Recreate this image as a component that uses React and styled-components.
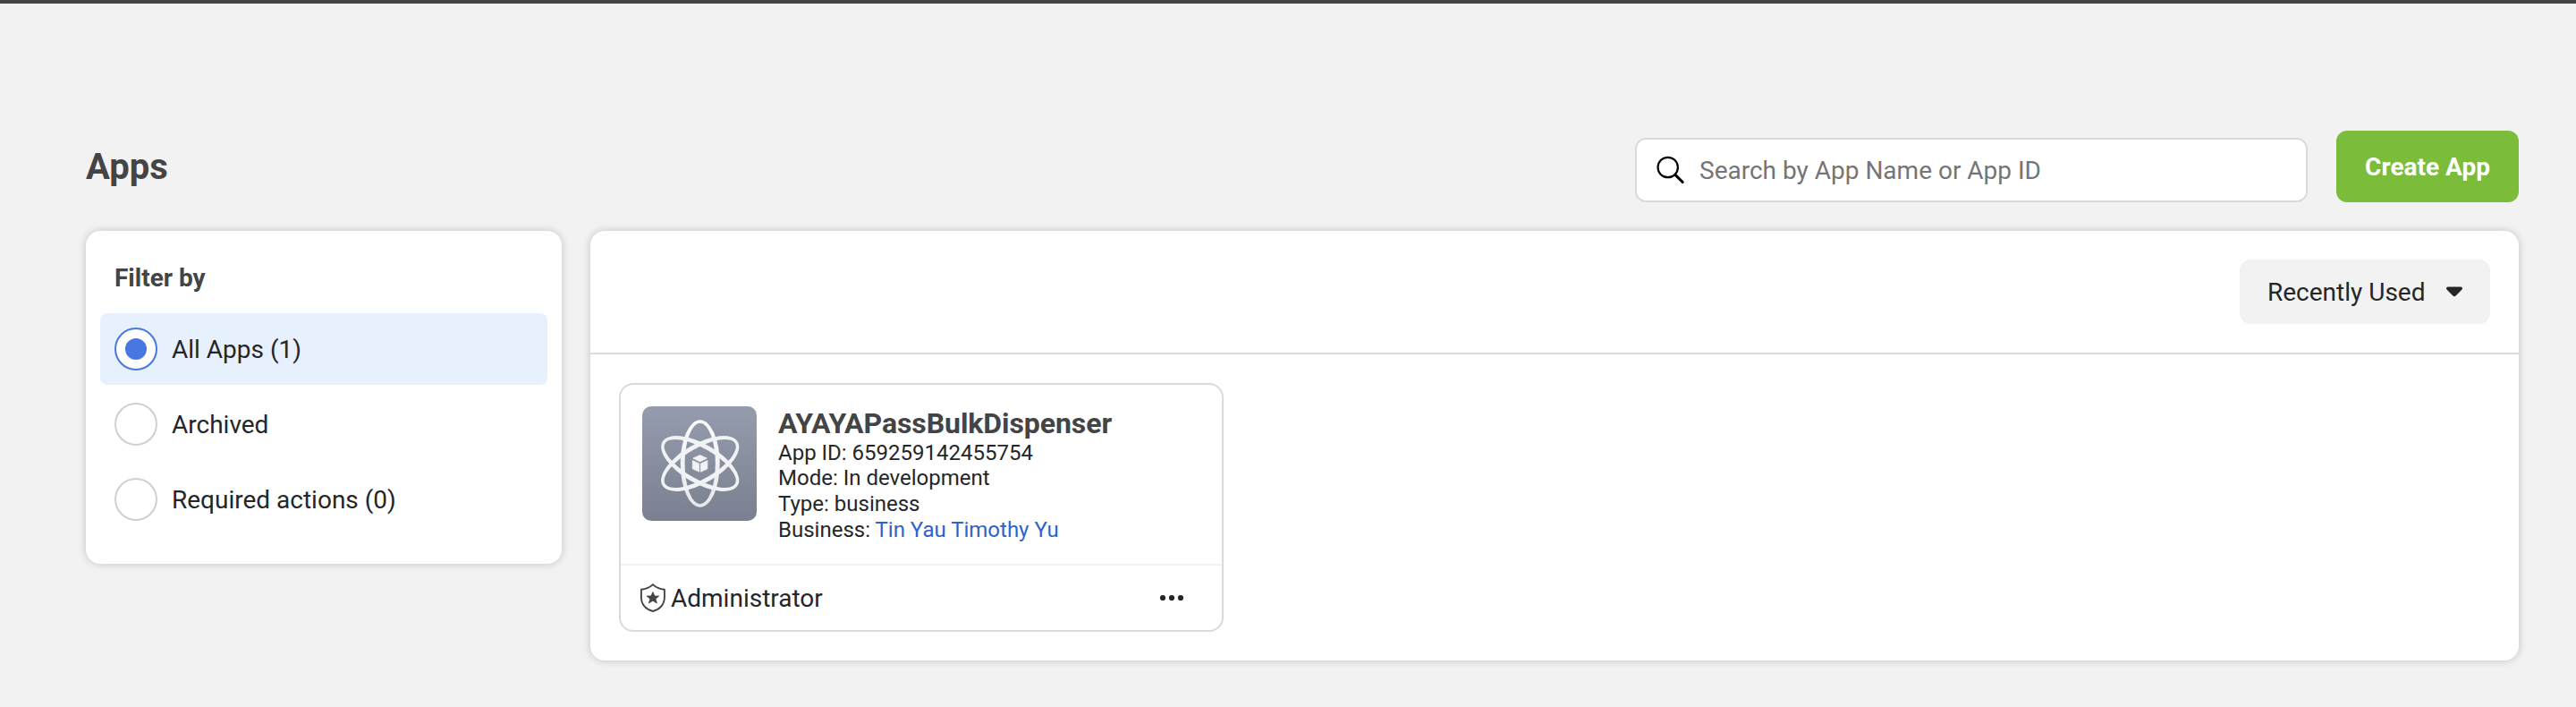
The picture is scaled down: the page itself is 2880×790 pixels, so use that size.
import React from "react";
import styled, { createGlobalStyle } from "styled-components";

const GlobalStyle = createGlobalStyle`
  *, *::before, *::after { box-sizing: border-box; }
  body {
    margin: 0;
    background: #f2f2f2;
    color: #252627;
    font-family: Roboto, "Liberation Sans", sans-serif;
    font-size: 28px;
    line-height: 36px;
  }
`;

const Page = styled.div`
  min-height: 790px;
  border-top: 4px solid #444;
  padding: 142px 64px 52px 96px;
`;

const Header = styled.header`
  display: flex;
  align-items: center;
  height: 80px;
  margin-bottom: 32px;
`;

const PageTitle = styled.h1`
  margin: 0;
  padding-top: 2px;
  flex: 1;
  font-size: 40px;
  line-height: 48px;
  font-weight: 700;
  color: #444;
`;

const SearchBox = styled.label`
  display: flex;
  align-items: center;
  align-self: flex-end;
  width: 752px;
  height: 72px;
  margin-right: 32px;
  padding: 0 22px;
  gap: 16px;
  background: #fff;
  border: 2px solid #dadada;
  border-radius: 12px;
`;

const SearchInput = styled.input`
  flex: 1;
  min-width: 0;
  height: 100%;
  padding: 0;
  border: 0;
  outline: 0;
  background: transparent;
  font: inherit;
  color: inherit;
  &::placeholder { color: #757575; opacity: 1; }
`;

const CreateButton = styled.button`
  width: 204px;
  height: 80px;
  padding: 2px 0 0;
  border: 0;
  border-radius: 12px;
  background: #7bbc3a;
  color: #fff;
  font: inherit;
  font-weight: 700;
`;

const Columns = styled.div`
  display: flex;
  align-items: flex-start;
  gap: 32px;
`;

const Panel = styled.section`
  background: #fff;
  border-radius: 16px;
  box-shadow: 0 0 10px rgba(0, 0, 0, 0.2);
`;

const FilterPanel = styled(Panel)`
  width: 532px;
  height: 372px;
  padding: 35px 16px 0;
`;

const FilterTitle = styled.h2`
  margin: 0 0 21px;
  padding-left: 16px;
  font-size: 28px;
  line-height: 36px;
  font-weight: 700;
  color: #444;
`;

const FilterList = styled.div`
  display: flex;
  flex-direction: column;
  gap: 4px;
`;

const FilterRow = styled.div`
  display: flex;
  align-items: center;
  gap: 16px;
  height: 80px;
  padding: 0 16px;
  border-radius: 8px;
  background: ${(p) => (p.$selected ? "#e7f1fe" : "transparent")};
`;

const Label = styled.span`
  padding-top: 2px;
`;

const Radio = styled.span`
  display: flex;
  align-items: center;
  justify-content: center;
  width: 48px;
  height: 48px;
  border-radius: 50%;
  background: #fff;
  border: 2px solid ${(p) => (p.$selected ? "#4877e0" : "#ced0d4")};
  &::after {
    content: "";
    width: 24px;
    height: 24px;
    border-radius: 50%;
    background: ${(p) => (p.$selected ? "#4877e0" : "transparent")};
  }
`;

const AppsPanel = styled(Panel)`
  flex: 1;
  height: 480px;
`;

const PanelToolbar = styled.div`
  display: flex;
  align-items: center;
  justify-content: flex-end;
  height: 138px;
  padding: 0 32px;
  border-bottom: 2px solid #dadada;
`;

const SortButton = styled.button`
  display: flex;
  align-items: center;
  justify-content: space-between;
  width: 280px;
  height: 72px;
  padding: 0 31px;
  border: 0;
  border-radius: 12px;
  background: #f2f2f2;
  color: inherit;
  font: inherit;
`;

const CardGrid = styled.div`
  display: flex;
  padding: 32px;
`;

const Card = styled.article`
  width: 676px;
  height: 278px;
  border: 2px solid #dadada;
  border-radius: 16px;
`;

const CardBody = styled.div`
  display: flex;
  gap: 24px;
  height: 202px;
  padding: 24px;
  border-bottom: 2px solid #f1f1f1;
`;

const Details = styled.div`
  font-size: 24px;
  line-height: 28.8px;
`;

const AppName = styled.h3`
  margin: 0 0 -0.4px;
  font-size: 32px;
  line-height: 38px;
  letter-spacing: -0.07px;
  font-weight: 700;
  color: #444;
`;

const Link = styled.a`
  color: #2f62cc;
  text-decoration: none;
`;

const CardFooter = styled.div`
  display: flex;
  align-items: center;
  height: 72px;
  padding: 0 42px 0 20px;
`;

const Role = styled(Label)`
  flex: 1;
  padding-left: 4px;
`;

const Icon = styled.svg`
  display: block;
  flex: none;
`;

const SearchIcon = () => (
  <Icon width="32" height="32" viewBox="0 0 32 32" fill="none" stroke="#000">
    <circle cx="12.7" cy="13" r="11.2" strokeWidth="2.2" />
    <path d="M21 21.3 29.2 29.5" strokeWidth="3.1" strokeLinecap="round" />
  </Icon>
);

const CaretIcon = () => (
  <Icon width="18" height="12" viewBox="0 0 18 12" fill="#252627">
    <path d="M1.8 0.4H16.2C18 0.4 18.5 2.6 17.3 3.8L10.6 10.6Q9 12.1 7.4 10.6L0.7 3.8C-0.5 2.6 0 0.4 1.8 0.4Z" />
  </Icon>
);

const ShieldIcon = () => (
  <Icon width="32" height="32" viewBox="0 0 32 32">
    <path
      d="M15.9 1.1C12.4 4.5 8 6.2 2.9 6.7V15.5C2.9 23.5 8.5 29.3 15.9 31C23.3 29.3 28.9 23.5 28.9 15.5V6.7C23.8 6.2 19.4 4.5 15.9 1.1Z"
      fill="none"
      stroke="#444"
      strokeWidth="1.9"
      strokeLinejoin="round"
    />
    <path
      d="M15.9 9.5 17.9 14H22.7L19 17.2 20.4 22 15.9 19.2 11.4 22 12.8 17.2 9.1 14H13.9Z"
      fill="#444"
      stroke="#444"
      strokeWidth="0.8"
      strokeLinejoin="round"
    />
  </Icon>
);

const MoreIcon = () => (
  <Icon width="28" height="8" viewBox="0 0 28 8" fill="#252627">
    <circle cx="4" cy="4" r="3.1" />
    <circle cx="14" cy="4" r="3.1" />
    <circle cx="24" cy="4" r="3.1" />
  </Icon>
);

// A ring that is thicker along its sides than at its tips.
const ORBIT =
  "M64.7 15.3A22 48.7 0 0 1 64.7 112.7A22 48.7 0 0 1 64.7 15.3ZM64.7 18.8A17.1 45.2 0 0 0 64.7 109.2A17.1 45.2 0 0 0 64.7 18.8Z";

const AtomLogo = () => (
  <Icon width="128" height="128" viewBox="0 0 128 128">
    <defs>
      <linearGradient id="tile" x1="0" y1="0" x2="0" y2="1">
        <stop offset="0" stopColor="#959cad" />
        <stop offset="1" stopColor="#7a8090" />
      </linearGradient>
      <linearGradient id="orbit" gradientUnits="userSpaceOnUse" x1="0" y1="15" x2="0" y2="113">
        <stop offset="0" stopColor="#fcfcfd" />
        <stop offset="1" stopColor="#e5e7ea" />
      </linearGradient>
    </defs>
    <rect width="128" height="128" rx="10" fill="url(#tile)" />
    <g fill="#f1f2f4" fillRule="evenodd">
      <path d={ORBIT} fill="url(#orbit)" />
      <path d={ORBIT} transform="rotate(60 64.7 64)" />
      <path d={ORBIT} transform="rotate(-60 64.7 64)" />
      <path d="M64.6 54.6 72.3 58 64.6 61.9 56.9 58Z" strokeLinejoin="round" stroke="#f1f2f4" strokeWidth="0.8" />
      <path d="M56.3 60.5 63.7 64.1V73.2L56.3 69.8Z" strokeLinejoin="round" stroke="#f1f2f4" strokeWidth="0.8" />
      <path d="M72.9 60.5 65.5 64.1V73.2L72.9 69.8Z" strokeLinejoin="round" stroke="#f1f2f4" strokeWidth="0.8" />
    </g>
  </Icon>
);

const FILTERS = [
  { label: "All Apps (1)", selected: true },
  { label: "Archived", selected: false },
  { label: "Required actions (0)", selected: false },
];

export default function App() {
  return (
    <>
      <GlobalStyle />
      <Page>
        <Header>
          <PageTitle>Apps</PageTitle>
          <SearchBox>
            <SearchIcon />
            <SearchInput placeholder="Search by App Name or App ID" />
          </SearchBox>
          <CreateButton>Create App</CreateButton>
        </Header>
        <Columns>
          <FilterPanel>
            <FilterTitle>Filter by</FilterTitle>
            <FilterList>
              {FILTERS.map((f) => (
                <FilterRow key={f.label} $selected={f.selected}>
                  <Radio $selected={f.selected} />
                  <Label>{f.label}</Label>
                </FilterRow>
              ))}
            </FilterList>
          </FilterPanel>
          <AppsPanel>
            <PanelToolbar>
              <SortButton>
                <Label>Recently Used</Label>
                <CaretIcon />
              </SortButton>
            </PanelToolbar>
            <CardGrid>
              <Card>
                <CardBody>
                  <AtomLogo />
                  <Details>
                    <AppName>AYAYAPassBulkDispenser</AppName>
                    <div>App ID: 659259142455754</div>
                    <div>Mode: In development</div>
                    <div>Type: business</div>
                    <div>
                      Business: <Link>Tin Yau Timothy Yu</Link>
                    </div>
                  </Details>
                </CardBody>
                <CardFooter>
                  <ShieldIcon />
                  <Role>Administrator</Role>
                  <MoreIcon />
                </CardFooter>
              </Card>
            </CardGrid>
          </AppsPanel>
        </Columns>
      </Page>
    </>
  );
}
